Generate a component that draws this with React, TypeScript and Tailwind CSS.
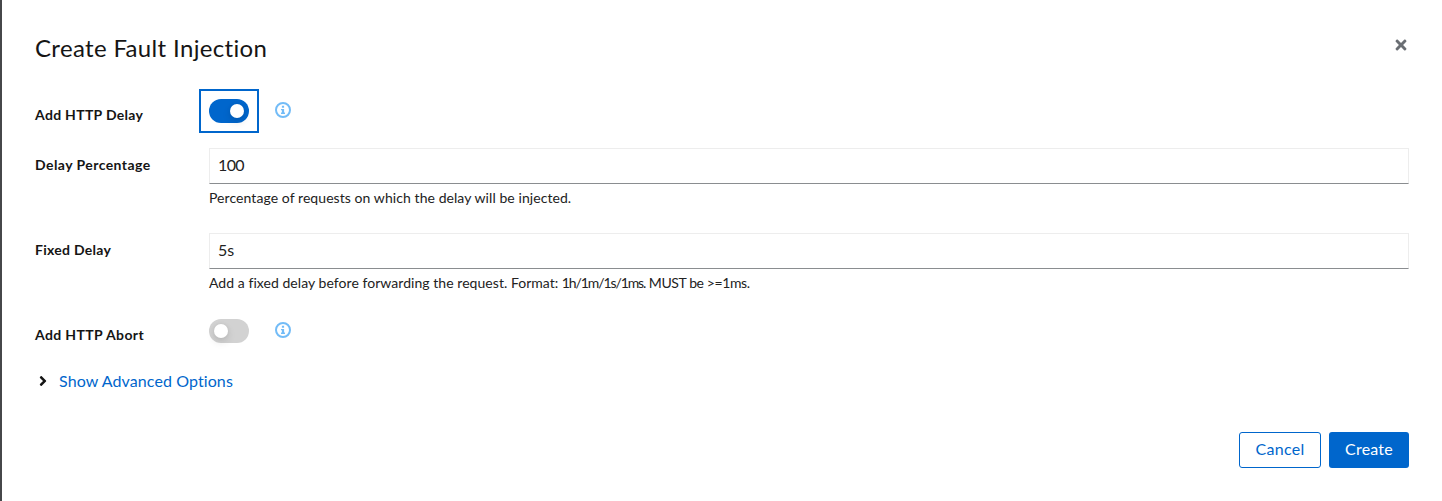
import { useState } from 'react';
import type { ReactNode } from 'react';
import { FaAngleRight, FaTimes } from 'react-icons/fa';

function InfoIcon() {
  return (
    <svg viewBox="0 0 16 16" className="size-4" fill="none" aria-hidden="true">
      <circle cx="8" cy="8" r="7" stroke="#73bcf7" strokeWidth="2" />
      <path fill="#73bcf7" d="M6.9 3.8h2.2v2H6.9zM6 6.9h3.1v3.6H10V12H6v-1.5h.9V8.3H6z" />
    </svg>
  );
}

type SwitchProps = { label: string; checked: boolean; focused?: boolean; onChange: () => void };

function Switch({ label, checked, focused, onChange }: SwitchProps) {
  return (
    <button
      type="button"
      role="switch"
      aria-checked={checked}
      aria-label={label}
      onClick={onChange}
      className={`h-6 w-10 outline-2 outline-offset-8 ${focused ? 'outline-[#0066cc]' : 'outline-transparent'}`}
    >
      <span
        className={`flex h-6 w-10 items-center rounded-full px-[5px] ${
          checked ? 'justify-end bg-[#0066cc]' : 'justify-start bg-[#d2d2d2]'
        }`}
      >
        <span className="size-3.5 rounded-full bg-white shadow-[0_4px_8px_rgba(3,3,3,0.12),0_0_4px_rgba(3,3,3,0.06)]" />
      </span>
    </button>
  );
}

function Row({ label, className, children }: { label: ReactNode; className: string; children: ReactNode }) {
  return (
    <div className={`grid grid-cols-[174px_1fr] ${className}`}>
      <div className="text-sm leading-[21px] font-bold">{label}</div>
      <div>{children}</div>
    </div>
  );
}

const inputClass =
  'block h-9 w-full border border-[#ededed] border-b-[#8a8d90] bg-white px-2 pb-1 text-base leading-6 text-[#222] outline-none';
const helperClass = 'mt-[3px] text-sm leading-[21px] whitespace-nowrap text-[#222]';

export default function App() {
  const [delay, setDelay] = useState(true);
  const [abort, setAbort] = useState(false);

  return (
    <div className="h-[501px] overflow-hidden border-l-2 border-[#46474a] bg-white pr-[33px] pl-[33px] font-['Lato','Liberation_Sans',sans-serif] text-[#151515]">
      <header className="flex items-start justify-between pt-8">
        <h1 className="text-2xl leading-[31px] tracking-[0.34px]">Create Fault Injection</h1>
        <button type="button" aria-label="Close" className="mt-[5px] flex h-4 w-4 items-center justify-center text-[#6a6e73]">
          <FaTimes className="size-4" />
        </button>
      </header>

      <form className="pt-[34px]">
        <Row className="h-[51px] pt-0.5" label={<div className="pt-[5px] tracking-[0.31px]">Add HTTP Delay</div>}>
          <div className="flex items-start gap-[26px]">
            <Switch label="Add HTTP Delay" checked={delay} focused onChange={() => setDelay(!delay)} />
            <span className="mt-[3px]"><InfoIcon /></span>
          </div>
        </Row>
        <Row className="h-[85px]" label={<div className="pt-1.5 tracking-[0.44px]">Delay Percentage</div>}>
          <input className={`${inputClass} tracking-[-0.6px]`} defaultValue="100" aria-label="Delay Percentage" />
          <p className={`${helperClass} tracking-[0.07px]`}>Percentage of requests on which the delay will be injected.</p>
        </Row>
        <Row className="h-[84px]" label={<div className="pt-1.5 tracking-[0.28px]">Fixed Delay</div>}>
          <input className={inputClass} defaultValue="5s" aria-label="Fixed Delay" />
          <p className={helperClass}>
            <span className="tracking-[0.05px]">Add a fixed delay before forwarding the request. </span>
            <span>Format: </span>
            <span className="tracking-[-1.1px]">1h/1m/1s/1ms.</span>
            <span> </span>
            <span className="tracking-[-0.4px]">MUST be &gt;=1ms.</span>
          </p>
        </Row>
        <Row className="h-[52px] pt-0.5" label={<div className="pt-[5px] tracking-[0.37px]">Add HTTP Abort</div>}>
          <div className="flex items-start gap-[26px]">
            <Switch label="Add HTTP Abort" checked={abort} onChange={() => setAbort(!abort)} />
            <span className="mt-[3px]"><InfoIcon /></span>
          </div>
        </Row>
      </form>

      <button type="button" className="flex h-6 items-center text-base leading-6 text-[#0066cc]">
        <FaAngleRight className="size-4 text-[#151515]" />
        <span className="ml-2 tracking-[0.1px]">Show Advanced Options</span>
      </button>

      <footer className="flex justify-end gap-2 pt-[39px] text-base leading-6">
        <button type="button" className="h-9 w-[82px] rounded-[3px] border border-[#0066cc] pb-0.5 tracking-[0.3px] text-[#0066cc]">Cancel</button>
        <button type="button" className="h-9 w-20 rounded-[3px] bg-[#0066cc] pb-0.5 tracking-[0.2px] text-white">Create</button>
      </footer>
    </div>
  );
}
